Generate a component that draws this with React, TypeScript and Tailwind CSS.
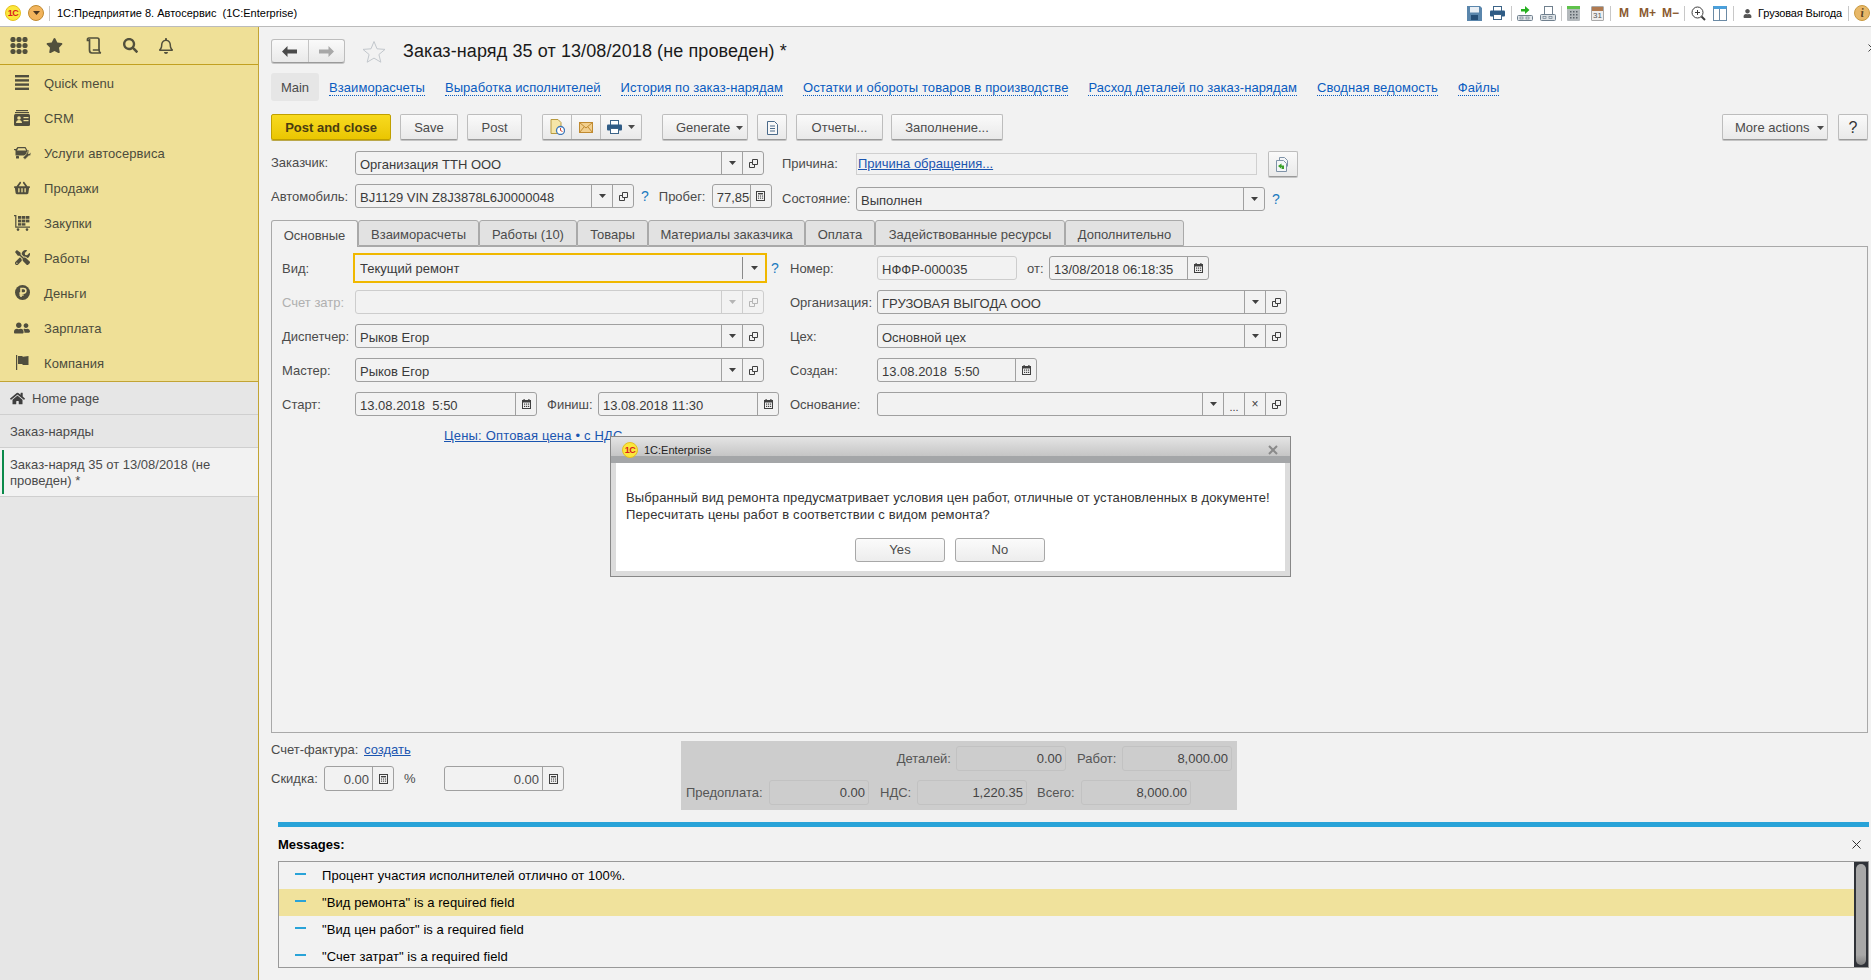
import React from "react";
import { FaHome, FaShoppingBasket, FaTools, FaUserFriends, FaUser, FaStar, FaSearch, FaRegBell } from "react-icons/fa";

const MENU: { label: string; icon: React.ReactNode }[] = [
    { label: "Quick menu", icon: <BarsIcon /> },
    { label: "CRM", icon: <CardIcon /> },
    { label: "Услуги автосервиса", icon: <CarIcon /> },
    { label: "Продажи", icon: <FaShoppingBasket size={16} /> },
    { label: "Закупки", icon: <CartIcon /> },
    { label: "Работы", icon: <FaTools size={15} /> },
    { label: "Деньги", icon: <RubleIcon /> },
    { label: "Зарплата", icon: <FaUserFriends size={16} /> },
    { label: "Компания", icon: <FlagIcon /> },
];

const LINKS = [
    { label: "Взаиморасчеты", w: "ml-[10px]" },
    { label: "Выработка исполнителей", w: "ml-[20px]" },
    { label: "История по заказ-нарядам", w: "ml-[20px]" },
    { label: "Остатки и обороты товаров в производстве", w: "ml-[20px]" },
    { label: "Расход деталей по заказ-нарядам", w: "ml-[20px]" },
    { label: "Сводная ведомость", w: "ml-[20px]" },
    { label: "Файлы", w: "ml-[20px]" },
];

const TABS = [
    { label: "Основные", w: "w-[87px]", active: true },
    { label: "Взаиморасчеты", w: "w-[121px]" },
    { label: "Работы (10)", w: "w-[98px]" },
    { label: "Товары", w: "w-[71px]" },
    { label: "Материалы заказчика", w: "w-[157px]" },
    { label: "Оплата", w: "w-[70px]" },
    { label: "Задействованные ресурсы", w: "w-[190px]" },
    { label: "Дополнительно", w: "w-[119px]" },
];

const MESSAGES = [
    { text: "Процент участия исполнителей отлично от 100%." },
    { text: "\"Вид ремонта\" is a required field", active: true },
    { text: "\"Вид цен работ\" is a required field" },
    { text: "\"Счет затрат\" is a required field" },
];

const LABEL = "pt-[1px] text-[#4b4b4b] ";

function BarsIcon() {
    return (
        <svg width="16" height="15" viewBox="0 0 16 15" fill="currentColor">
            <rect x="1" y="0" width="14" height="2.4" />
            <rect x="1" y="4.2" width="14" height="2.4" />
            <rect x="1" y="8.4" width="14" height="2.4" />
            <rect x="1" y="12.6" width="14" height="2.4" />
        </svg>
    );
}

function CardIcon() {
    return (
        <svg width="16" height="16" viewBox="0 0 16 16" fill="currentColor">
            <rect x="2" y="0" width="12" height="1.2" />
            <rect x="1" y="2" width="14" height="1.2" />
            <rect x="0" y="4" width="16" height="12" rx="1.5" />
            <circle cx="5" cy="8" r="1.8" fill="#efe097" />
            <path d="M2 13c0-2 1.4-3 3-3s3 1 3 3z" fill="#efe097" />
            <rect x="9.5" y="7" width="5" height="1.2" fill="#efe097" />
            <rect x="9.5" y="10" width="5" height="1.2" fill="#efe097" />
        </svg>
    );
}

function CarIcon() {
    return (
        <svg width="17" height="14" viewBox="0 0 17 14" fill="currentColor">
            <path d="M3.5 1h8l2 3.5h1.5v2H14v1l-4 2H1.5V4.5L0 4V3h2zM4.2 2.2 3 4.5h9.2l-1.3-2.3z" fillRule="evenodd" />
            <rect x="2" y="10" width="3" height="2.5" rx=".5" />
            <path d="M16.5 6.5l-1.6 1.4-1-.9 1.3-1.6c-1.4-.4-2.9.7-2.6 2.3L9 11.5l2 2 3.8-3.7c1.7.2 2.7-1.4 1.7-3.3z" stroke="#efe097" strokeWidth=".6" />
        </svg>
    );
}

function CartIcon() {
    return (
        <svg width="16" height="16" viewBox="0 0 16 16" fill="currentColor">
            <path d="M0 0h2.4v11.5H16v1.2H1.2V1.2H0z" />
            <rect x="4" y="1" width="3.4" height="2.8" />
            <rect x="8" y="1" width="3.4" height="2.8" />
            <rect x="12" y="1" width="3.4" height="2.8" />
            <rect x="4" y="4.6" width="3.4" height="2.8" />
            <rect x="8" y="4.6" width="3.4" height="2.8" />
            <rect x="12" y="4.6" width="3.4" height="2.8" />
            <rect x="4" y="8.2" width="3.4" height="2.4" />
            <rect x="8" y="8.2" width="3.4" height="2.4" />
            <circle cx="4" cy="14.6" r="1.3" />
            <circle cx="13" cy="14.6" r="1.3" />
        </svg>
    );
}

function RubleIcon() {
    return (
        <svg width="15" height="15" viewBox="0 0 15 15">
            <circle cx="7.5" cy="7.5" r="7.5" fill="currentColor" />
            <path d="M6 12V3.5h2.6a2.3 2.3 0 0 1 0 4.6H4.4M4.4 10h4.2" fill="none" stroke="#efe097" strokeWidth="1.6" />
        </svg>
    );
}

function FlagIcon() {
    return (
        <svg width="13" height="15" viewBox="0 0 13 15" fill="currentColor">
            <rect x="0" y="0" width="1.2" height="15" />
            <path d="M2 1h4l1 .8 5.5-.8v9H7l-1-1H2z" />
        </svg>
    );
}

function GridIcon() {
    return (
        <svg width="18" height="17" viewBox="0 0 18 17" fill="currentColor">
            {[3, 9, 15].flatMap((x) =>
                [2.5, 8.5, 14.5].map((y) => <circle key={x + "-" + y} cx={x} cy={y} r="2.6" />)
            )}
        </svg>
    );
}

function ScrollIcon() {
    return (
        <svg width="17" height="17" viewBox="0 0 17 17" fill="none" stroke="currentColor" strokeWidth="1.7">
            <path d="M3.5 3.5H1.5V2a1.3 1.3 0 0 1 1.3-1h8.5c1.2 0 1.7.8 1.7 1.8V13" />
            <path d="M3.5 2v11c0 1.6.8 3 2.4 3h9c-1.2-.4-1.9-1.2-1.9-3H6.8" />
        </svg>
    );
}

function Arrow() {
    return (
        <svg width="7" height="4" viewBox="0 0 7 4" fill="currentColor">
            <path d="M0 0h7L3.5 4z" />
        </svg>
    );
}

function OpenIcon() {
    return (
        <svg width="9" height="9" viewBox="0 0 9 9" fill="none" stroke="currentColor">
            <path d="M3.5 .5h5v5h-5z" />
            <path d="M3 3.5H.5v5h5V6" />
        </svg>
    );
}

function CalendarIcon() {
    return (
        <svg width="9" height="10" viewBox="0 0 9 10" fill="currentColor">
            <path d="M0 1h1.5V0h1.2v1h3.6V0h1.2v1H9v9H0zM1 3.5V9h7V3.5z" fillRule="evenodd" />
            <rect x="2" y="4.5" width="1.2" height="1.2" />
            <rect x="4" y="4.5" width="1.2" height="1.2" />
            <rect x="6" y="4.5" width="1.2" height="1.2" />
            <rect x="2" y="6.8" width="1.2" height="1.2" />
            <rect x="4" y="6.8" width="1.2" height="1.2" />
            <rect x="6" y="6.8" width="1.2" height="1.2" />
        </svg>
    );
}

function CalcIcon() {
    return (
        <svg width="9" height="10" viewBox="0 0 9 10" fill="currentColor">
            <path d="M0 0h9v10H0zM1 1v7.9h7V1z" fillRule="evenodd" />
            <rect x="2" y="2" width="5" height="1.4" />
            <rect x="2" y="4.5" width="1.1" height="1.1" />
            <rect x="4" y="4.5" width="1.1" height="1.1" />
            <rect x="6" y="4.5" width="1.1" height="1.1" />
            <rect x="2" y="6.6" width="1.1" height="1.1" />
            <rect x="4" y="6.6" width="1.1" height="1.1" />
            <rect x="6" y="6.6" width="1.1" height="1.1" />
        </svg>
    );
}

function PrinterIcon() {
    return (
        <svg width="15" height="14" viewBox="0 0 15 14">
            <rect x="3.5" y=".5" width="8" height="5" fill="#fff" stroke="#3c6488" />
            <rect x="0" y="4.5" width="15" height="6" rx="1" fill="#2f5c86" />
            <rect x="3.5" y="8.5" width="8" height="5" fill="#fff" stroke="#3c6488" />
        </svg>
    );
}

function Logo1C() {
    return (
        <span className="flex h-[16px] w-[16px] shrink-0 items-center justify-center rounded-full border border-[#e6c020] bg-[#fbe73c] text-[9px] font-bold leading-none tracking-[-0.5px] text-[#d8201c]">
            1С
        </span>
    );
}

function TopIcon({ children, className }: { children: React.ReactNode; className: string }) {
    return <span className={"flex h-[16px] items-center justify-center " + className}>{children}</span>;
}

function TopSep({ className }: { className: string }) {
    return <span className={"h-[15px] w-px bg-[#c8c8c8] " + className} />;
}

function TopBar() {
    return (
        <div className="flex h-[27px] items-center border-b border-[#bbbbbb] bg-white text-[11px] text-black">
            <span className="ml-[5px]"><Logo1C /></span>
            <span className="ml-[7px] flex h-[16px] w-[16px] items-center justify-center rounded-full border border-[#c08a30] bg-[#f2b45c] text-[#4a3520]">
                <Arrow />
            </span>
            <span className="ml-[5px] h-[15px] w-px bg-[#c8c8c8]" />
            <span className="ml-[7px] whitespace-pre">1С:Предприятие 8. Автосервис  (1С:Enterprise)</span>
            <div className="ml-auto flex items-center">
                <TopIcon className="w-[15px]">
                    <svg width="15" height="15" viewBox="0 0 15 15">
                        <path d="M0 0h13l2 2v13H0z" fill="#5a86ac" />
                        <rect x="3" y="1" width="9" height="5.5" fill="#e8eef4" />
                        <rect x="4" y="9" width="7" height="5" fill="#254e76" />
                    </svg>
                </TopIcon>
                <TopIcon className="ml-[8px] w-[15px]"><PrinterIcon /></TopIcon>
                <TopSep className="ml-[6px]" />
                <TopIcon className="ml-[5px] w-[16px]">
                    <svg width="16" height="15" viewBox="0 0 16 15">
                        <path d="M4 3h4V0l4.5 4L8 8V5.5H4z" fill="#25b020" />
                        <rect x=".5" y="9.5" width="15" height="5" rx="1" fill="#e2e6ea" stroke="#70808e" />
                        <rect x="3" y="11" width="3" height="2" fill="none" stroke="#70808e" strokeWidth=".7" />
                        <rect x="9" y="11" width="3" height="2" fill="none" stroke="#70808e" strokeWidth=".7" />
                    </svg>
                </TopIcon>
                <TopIcon className="ml-[7px] w-[16px]">
                    <svg width="16" height="15" viewBox="0 0 16 15">
                        <rect x="4.5" y=".5" width="8" height="8" fill="#fff" stroke="#70808e" />
                        <rect x=".5" y="8.5" width="15" height="6" rx="1" fill="#dde2e6" stroke="#70808e" />
                        <rect x="3" y="10.5" width="3" height="2" fill="none" stroke="#70808e" strokeWidth=".7" />
                        <rect x="9" y="10.5" width="3" height="2" fill="none" stroke="#70808e" strokeWidth=".7" />
                    </svg>
                </TopIcon>
                <TopSep className="ml-[5px]" />
                <TopIcon className="ml-[5px] w-[13px]">
                    <svg width="13" height="15" viewBox="0 0 13 15">
                        <rect width="13" height="15" rx="1" fill="#b4b9bc" />
                        <rect width="13" height="3" fill="#5fc24c" />
                        <g fill="#5a6268">
                            <rect x="3" y="5" width="1.5" height="1.5" /><rect x="6" y="5" width="1.5" height="1.5" /><rect x="9" y="5" width="1.5" height="1.5" />
                            <rect x="3" y="8" width="1.5" height="1.5" /><rect x="6" y="8" width="1.5" height="1.5" /><rect x="9" y="8" width="1.5" height="1.5" />
                            <rect x="3" y="11" width="1.5" height="1.5" /><rect x="6" y="11" width="1.5" height="1.5" /><rect x="9" y="11" width="1.5" height="1.5" />
                        </g>
                    </svg>
                </TopIcon>
                <TopIcon className="relative ml-[11px] w-[13px]">
                    <span className="flex h-[15px] w-[13px] flex-col overflow-hidden rounded-[1px] border border-[#a9a9a9] bg-[#eeeeee]">
                        <span className="h-[4px] w-full shrink-0 bg-[#b07a50]" />
                        <span className="text-center text-[8px] leading-[10px] text-[#555555]">31</span>
                    </span>
                </TopIcon>
                <TopSep className="ml-[6px]" />
                <span className="ml-[8px] text-[12px] font-bold text-[#8a5a30]">M</span>
                <span className="ml-[10px] text-[12px] font-bold text-[#8a5a30]">M+</span>
                <span className="ml-[6px] text-[12px] font-bold text-[#8a5a30]">M−</span>
                <TopSep className="ml-[5px]" />
                <TopIcon className="ml-[6px] w-[15px]">
                    <svg width="15" height="15" viewBox="0 0 15 15" fill="none" stroke="#3d3d3d">
                        <circle cx="6.5" cy="6.5" r="5.5" />
                        <path d="M4 6.5h5M6.5 4v5" />
                        <path d="M10.5 10.5 14 14" strokeWidth="2" />
                    </svg>
                </TopIcon>
                <TopIcon className="ml-[7px] w-[14px]">
                    <span className="flex h-[15px] w-[14px] border border-[#6b8aa5] border-t-[3px] border-t-[#4aa0dc]">
                        <span className="w-1/2 border-r border-[#6b8aa5]" />
                    </span>
                </TopIcon>
                <TopSep className="ml-[6px]" />
                <span className="ml-[9px] text-[#555555]"><FaUser size={9} /></span>
                <span className="ml-[6px] whitespace-nowrap tracking-[-0.15px]">Грузовая Выгода</span>
                <TopSep className="ml-[6px]" />
                <span className="ml-[5px] mr-[1px] flex h-[16px] w-[16px] items-center justify-center rounded-full border border-[#c99a40] bg-[#e8b868] font-serif text-[11px] font-bold italic leading-none text-[#5a4020]">
                    i
                </span>
            </div>
        </div>
    );
}

function Sidebar() {
    return (
        <aside className="flex w-[259px] shrink-0 flex-col border-r border-[#c2a434] bg-[#e6e6e6]">
            <div className="flex h-[38px] items-center border-b border-[#c2a020] bg-[#efe097] text-[#52503c]">
                <span className="ml-[10px]"><GridIcon /></span>
                <span className="ml-[18px]"><FaStar size={17} /></span>
                <span className="ml-[23px]"><ScrollIcon /></span>
                <span className="ml-[20px]"><FaSearch size={15} /></span>
                <span className="ml-[20px]"><FaRegBell size={16} /></span>
            </div>
            <div className="flex flex-col border-b border-[#c2a434] bg-[#efe097] pb-[1px] tracking-[0.08px] text-[#4c4c3c]">
                {MENU.map((item) => (
                    <div key={item.label} className="flex h-[35px] items-center">
                        <span className="flex w-[44px] shrink-0 justify-center text-[#504e3e]">{item.icon}</span>
                        <span className="pt-[2px]">{item.label}</span>
                    </div>
                ))}
            </div>
            <div className="flex h-[33px] items-center border-b border-[#cfcfcf] text-[#4a4a4a]">
                <span className="ml-[10px] text-[#3f3f3f]"><FaHome size={15} /></span>
                <span className="ml-[7px] pt-[2px]">Home page</span>
            </div>
            <div className="flex h-[33px] items-center border-b border-[#cfcfcf] pl-[10px] pt-[2px] text-[#4a4a4a]">
                Заказ-наряды
            </div>
            <div className="flex h-[49px] items-center border-b border-[#cfcfcf] bg-[#f2f2f2] py-[2px] pl-[2px] text-[#4a4a4a]">
                <span className="h-full w-[2px] shrink-0 bg-[#0a8a4a]" />
                <span className="ml-[6px] w-[240px] pt-[1px] leading-[16px]">Заказ-наряд 35 от 13/08/2018 (не проведен) *</span>
            </div>
        </aside>
    );
}

const BTN = "flex h-[26px] items-center justify-center rounded-[2px] border border-[#bdbdbd] border-b-[#9a9a9a] bg-gradient-to-b from-[#fafafa] to-[#e9e9e9] pt-[1px] text-[#4b4b4b] shadow-[0_1px_0_#c4c4c4]";

function Toolbar() {
    return (
        <div className="mt-[13px] flex h-[27px] pr-[3px]">
            <button className="flex h-[26px] w-[120px] items-center justify-center rounded-[2px] border border-[#c0a000] bg-gradient-to-b from-[#f8da1e] to-[#eac600] pt-[1px] font-bold text-[#4a3c10] shadow-[0_1px_0_#bba84a]">
                Post and close
            </button>
            <button className={BTN + " ml-[9px] w-[58px]"}>Save</button>
            <button className={BTN + " ml-[9px] w-[55px]"}>Post</button>
            <div className={BTN + " ml-[20px] w-[100px] !justify-start !pt-0"}>
                <span className="flex h-full w-[29px] items-center justify-center border-r border-[#bdbdbd]">
                    <svg width="15" height="16" viewBox="0 0 15 16">
                        <path d="M1 .5h7l3 3v11H1z" fill="#f5e6a8" stroke="#b89a40" />
                        <circle cx="10.5" cy="11.5" r="4" fill="#fff" stroke="#3f78b8" strokeWidth="1.3" />
                        <path d="M10.5 9v2.5l2 1" fill="none" stroke="#d04030" />
                    </svg>
                </span>
                <span className="flex h-full w-[29px] items-center justify-center border-r border-[#bdbdbd]">
                    <svg width="14" height="11" viewBox="0 0 14 11">
                        <rect x=".5" y=".5" width="13" height="10" fill="#f2cf8e" stroke="#c08a30" />
                        <path d="M.5.5 7 6l6.5-5.5M.5 10.5 5 5M13.5 10.5 9 5" fill="none" stroke="#c08a30" />
                    </svg>
                </span>
                <span className="flex flex-1 items-center justify-center gap-[6px] text-[#4b4b4b]">
                    <PrinterIcon />
                    <Arrow />
                </span>
            </div>
            <button className={BTN + " ml-[20px] w-[86px] !justify-start gap-[6px] pl-[13px]"}>Generate <Arrow /></button>
            <button className={BTN + " ml-[9px] w-[30px]"}>
                <svg width="11" height="14" viewBox="0 0 11 14" fill="none" stroke="#4a6a8a">
                    <path d="M.5.5h7l3 3v10H.5z" fill="#f8f8f8" />
                    <path d="M3 5h5M3 7.5h5M3 10h5" />
                </svg>
            </button>
            <button className={BTN + " ml-[9px] w-[87px]"}>Отчеты...</button>
            <button className={BTN + " ml-[8px] w-[112px]"}>Заполнение...</button>
            <button className={BTN + " ml-auto w-[106px] !justify-start gap-[8px] pl-[12px]"}>More actions <Arrow /></button>
            <button className={BTN + " ml-[10px] w-[30px] text-[16px] text-[#333333]"}>?</button>
        </div>
    );
}

type Seg = "arrow" | "open" | "calendar" | "calc" | "dots" | "clear";

function Field({ w, text, segs = [], disabled, right }: { w: string; text?: string; segs?: Seg[]; disabled?: boolean; right?: boolean }) {
    const line = disabled ? "border-[#cdcdcd]" : "border-[#a0a0a0]";
    const ink = disabled ? "text-[#b5b5b5]" : "text-[#404040]";
    return (
        <div className={"flex shrink-0 items-stretch overflow-hidden rounded-[3px] border " + (right ? "h-[25px] " : "h-[24px] ") + line + " " + w}>
            <span className={"min-w-0 flex-1 overflow-hidden whitespace-pre pt-[2px] leading-[22px] " + (right ? "pr-[3px] text-right text-[#4b4b4b]" : "pl-[4px] text-[#3a3a3a]")}>{text}</span>
            {segs.map((s, i) => (
                <span key={i} className={"flex w-[21px] shrink-0 items-center justify-center border-l " + line + " " + ink}>
                    {s === "arrow" && <Arrow />}
                    {s === "open" && <OpenIcon />}
                    {s === "calendar" && <CalendarIcon />}
                    {s === "calc" && <CalcIcon />}
                    {s === "dots" && <span className="pt-[6px] text-[11px] leading-none">...</span>}
                    {s === "clear" && <span className="text-[12px] leading-none">×</span>}
                </span>
            ))}
        </div>
    );
}

function Help({ className = "" }: { className?: string }) {
    return <span className={"text-[14px] text-[#1a7abf] " + className}>?</span>;
}

function HeaderForm() {
    return (
        <div className="mt-[10px] flex h-[70px]">
            <div className="flex w-[511px] shrink-0 flex-col gap-[9px]">
                <div className="flex items-center">
                    <span className="w-[84px] text-[#4b4b4b]">Заказчик:</span>
                    <Field w="w-[409px]" text="Организация ТТН ООО" segs={["arrow", "open"]} />
                </div>
                <div className="flex items-center">
                    <span className={LABEL + "w-[84px]"}>Автомобиль:</span>
                    <Field w="w-[279px]" text="BJ1129 VIN Z8J3878L6J0000048" segs={["arrow", "open"]} />
                    <Help className="ml-[7px]" />
                    <span className={LABEL + "ml-[10px] w-[53px]"}>Пробег:</span>
                    <Field w="w-[60px]" text="77,850" segs={["calc"]} />
                </div>
            </div>
            <div className="flex flex-col">
                <div className="flex h-[26px] items-center">
                    <span className="w-[74px] text-[#4b4b4b]">Причина:</span>
                    <div className="h-[22px] w-[401px] border border-[#d0d0d0] pl-[1px] leading-[20px] text-[#1a55b0] underline">Причина обращения...</div>
                    <button className={BTN + " ml-[11px] w-[30px]"}>
                        <svg width="14" height="15" viewBox="0 0 14 15" fill="none">
                            <path d="M3.5 3.5v-3h5l3 3v6" fill="#f4f6f8" stroke="#7f93a8" />
                            <path d="M.5 3.5h7l3 3v8H.5z" fill="#f4f6f8" stroke="#7f93a8" />
                            <path d="M8 12V8.500H5.500v-2L2 9l3.500 3V10H6v2z" fill="#38a028" />
                        </svg>
                    </button>
                </div>
                <div className="mt-[10px] flex items-center">
                    <span className="w-[74px] text-[#4b4b4b]">Состояние:</span>
                    <Field w="w-[409px]" text="Выполнен" segs={["arrow"]} />
                    <Help className="ml-[7px]" />
                </div>
            </div>
        </div>
    );
}

function TabBox() {
    return (
        <div className="mt-[-1px] flex h-[513px] w-[1597px] flex-col">
            <div className="flex h-[27px] shrink-0">
                {TABS.map((tab) => (
                    <div
                        key={tab.label}
                        className={
                            "flex items-center justify-center rounded-t-[3px] border border-[#a9a9a9] pt-[4px] text-[#4b4b4b] " +
                            tab.w +
                            (tab.active ? " relative z-10 h-[27px] border-b-0 bg-[#f2f2f2]" : " h-[26px] bg-[#e2e2e2]")
                        }
                    >
                        {tab.label}
                    </div>
                ))}
            </div>
            <div className="-mt-px flex-1 border border-[#a9a9a9] pl-[10px] pt-[9px]">
                <div className="flex">
                    <div className="flex w-[508px] shrink-0 flex-col gap-[10px]">
                        <div className="flex h-[24px] items-center">
                            <span className={LABEL + "w-[71px]"}>Вид:</span>
                            <div className="flex h-[30px] w-[414px] shrink-0 items-stretch border-2 border-[#f0b800]">
                                <span className="flex-1 pl-[5px] pt-[2px] leading-[24px] text-[#3a3a3a]">Текущий ремонт</span>
                                <span className="my-[2px] flex w-[23px] items-center justify-center border-l border-[#8a8a8a] text-[#404040]"><Arrow /></span>
                            </div>
                            <Help className="ml-[4px]" />
                        </div>
                        <div className="flex h-[24px] items-center">
                            <span className="w-[73px] pt-[1px] text-[#b0b0b0]">Счет затр:</span>
                            <Field w="w-[409px]" segs={["arrow", "open"]} disabled />
                        </div>
                        <div className="flex h-[24px] items-center">
                            <span className={LABEL + "w-[73px]"}>Диспетчер:</span>
                            <Field w="w-[409px]" text="Рыков Егор" segs={["arrow", "open"]} />
                        </div>
                        <div className="flex h-[24px] items-center">
                            <span className={LABEL + "w-[73px]"}>Мастер:</span>
                            <Field w="w-[409px]" text="Рыков Егор" segs={["arrow", "open"]} />
                        </div>
                        <div className="flex h-[24px] items-center">
                            <span className={LABEL + "w-[73px]"}>Старт:</span>
                            <Field w="w-[182px]" text="13.08.2018  5:50" segs={["calendar"]} />
                            <span className={LABEL + "ml-[10px] w-[51px]"}>Финиш:</span>
                            <Field w="w-[181px]" text="13.08.2018 11:30" segs={["calendar"]} />
                        </div>
                    </div>
                    <div className="flex flex-col gap-[10px]">
                        <div className="flex h-[24px] items-center">
                            <span className={LABEL + "w-[87px]"}>Номер:</span>
                            <Field w="w-[140px]" text="НФФР-000035" disabled />
                            <span className={LABEL + "ml-[10px] w-[22px]"}>от:</span>
                            <Field w="w-[160px]" text="13/08/2018 06:18:35" segs={["calendar"]} />
                        </div>
                        <div className="flex h-[24px] items-center">
                            <span className={LABEL + "w-[87px]"}>Организация:</span>
                            <Field w="w-[410px]" text="ГРУЗОВАЯ ВЫГОДА ООО" segs={["arrow", "open"]} />
                        </div>
                        <div className="flex h-[24px] items-center">
                            <span className={LABEL + "w-[87px]"}>Цех:</span>
                            <Field w="w-[410px]" text="Основной цех" segs={["arrow", "open"]} />
                        </div>
                        <div className="flex h-[24px] items-center">
                            <span className={LABEL + "w-[87px]"}>Создан:</span>
                            <Field w="w-[160px]" text="13.08.2018  5:50" segs={["calendar"]} />
                        </div>
                        <div className="flex h-[24px] items-center">
                            <span className={LABEL + "w-[87px]"}>Основание:</span>
                            <Field w="w-[410px]" segs={["arrow", "dots", "clear", "open"]} />
                        </div>
                    </div>
                </div>
                <div className="ml-[162px] mt-[12px] leading-[16px] tracking-[0.18px] text-[#1a55b0] underline">Цены: Оптовая цена • с НДС</div>
            </div>
        </div>
    );
}

function TotalField({ w, value }: { w: string; value: string }) {
    return (
        <span className={"flex h-[25px] shrink-0 items-center justify-end rounded-[3px] border border-[#c2c2c2] pr-[3px] pt-[1px] text-[#444444] " + w}>{value}</span>
    );
}

function Totals() {
    return (
        <div className="flex h-[89px]">
            <div className="w-[410px] shrink-0 pt-[8px]">
                <div className="leading-[18px] text-[#4b4b4b]">
                    Счет-фактура: <span className="ml-[2px] text-[#1a55b0] underline">создать</span>
                </div>
                <div className="mt-[7px] flex items-center">
                    <span className="w-[53px] text-[#4b4b4b]">Скидка:</span>
                    <Field w="w-[70px]" text="0.00" segs={["calc"]} right />
                    <span className="ml-[10px] w-[40px] text-[#4b4b4b]">%</span>
                    <Field w="w-[120px]" text="0.00" segs={["calc"]} right />
                </div>
            </div>
            <div className="mt-[8px] flex h-[69px] w-[556px] flex-col gap-[9px] bg-[#cdcdcd] pt-[5px] text-[#555555]">
                <div className="flex items-center">
                    <span className="w-[270px] text-right">Деталей:</span>
                    <TotalField w="ml-[5px] w-[110px]" value="0.00" />
                    <span className="ml-[11px] w-[45px]">Работ:</span>
                    <TotalField w="w-[110px]" value="8,000.00" />
                </div>
                <div className="flex items-center">
                    <span className="ml-[5px] w-[83px]">Предоплата:</span>
                    <TotalField w="w-[100px]" value="0.00" />
                    <span className="ml-[11px] w-[37px]">НДС:</span>
                    <TotalField w="w-[110px]" value="1,220.35" />
                    <span className="ml-[10px] w-[44px]">Всего:</span>
                    <TotalField w="w-[110px]" value="8,000.00" />
                </div>
            </div>
        </div>
    );
}

function Messages() {
    return (
        <div className="ml-[7px] flex w-[1591px] flex-col">
            <div className="h-[5px] bg-[#29a3d8]" />
            <div className="flex h-[34px] items-center justify-between pr-[8px] font-bold text-black">
                <span className="pt-[1px]">Messages:</span>
                <svg width="9" height="9" viewBox="0 0 9 9" stroke="#333333" fill="none"><path d="M.5.5l8 8M8.5.5l-8 8" /></svg>
            </div>
            <div className="flex h-[107px] overflow-hidden border border-[#999999]">
                <div className="min-w-0 flex-1 tracking-[0.08px]">
                    {MESSAGES.map((m) => (
                        <div key={m.text} className={"flex h-[27px] items-center text-black " + (m.active ? "bg-[#f0e29c]" : "")}>
                            <span className="mb-[3px] ml-[16px] h-[2px] w-[11px] shrink-0 bg-[#29a3d8]" />
                            <span className="ml-[16px] pt-[1px]">{m.text}</span>
                        </div>
                    ))}
                </div>
                <div className="flex w-[14px] shrink-0 justify-center bg-[#2f3238] py-[2px]">
                    <span className="w-[10px] rounded-[5px] bg-gradient-to-b from-[#a8a8a8] from-90% to-[#808080]" />
                </div>
            </div>
        </div>
    );
}

function Dialog() {
    return (
        <div className="absolute left-[610px] top-[436px] flex h-[141px] w-[681px] flex-col border border-[#888888] bg-[#dcdcdc]">
            <div className="flex h-[26px] items-center bg-[linear-gradient(#e4e4e4,#c6c6c6_72%,#a4a6a8_73%)] pl-[11px] pr-[12px] text-[11px] text-[#222222]">
                <Logo1C />
                <span className="ml-[6px]">1C:Enterprise</span>
                <svg className="ml-auto" width="10" height="10" viewBox="0 0 10 10" stroke="#8a8a8a" strokeWidth="2" fill="none"><path d="M1 1l8 8M9 1l-8 8" /></svg>
            </div>
            <div className="mx-[5px] mb-[5px] flex flex-1 flex-col bg-white pl-[10px] pt-[26px] tracking-[0.12px] text-[#333333]">
                <div className="leading-[17px]">
                    Выбранный вид ремонта предусматривает условия цен работ, отличные от установленных в документе!
                    <br />
                    Пересчитать цены работ в соответствии с видом ремонта?
                </div>
                <div className="mt-[15px] flex gap-[10px] pl-[229px]">
                    <button className="h-[24px] w-[90px] rounded-[3px] border border-[#a8a8a8] bg-gradient-to-b from-[#fbfbfb] to-[#ededed] text-[#4b4b4b]">Yes</button>
                    <button className="h-[24px] w-[90px] rounded-[3px] border border-[#a8a8a8] bg-gradient-to-b from-[#fbfbfb] to-[#ededed] text-[#4b4b4b]">No</button>
                </div>
            </div>
        </div>
    );
}

export default function App() {
    return (
        <div className="relative flex h-[980px] w-[1871px] flex-col overflow-hidden bg-[#f2f2f2] font-['Liberation_Sans',Arial,sans-serif] text-[13px]">
            <TopBar />
            <div className="flex min-h-0 flex-1">
                <Sidebar />
                <main className="relative min-w-0 flex-1 pl-[12px]">
                    <div className="mt-[12px] flex h-[24px] items-center">
                        <div className="flex h-[24px] w-[74px] rounded-[3px] border border-[#bdbdbd] border-b-[#9a9a9a] bg-gradient-to-b from-[#fafafa] to-[#e9e9e9] shadow-[0_1px_0_#c4c4c4]">
                            <span className="flex flex-1 items-center justify-center border-r border-[#c4c4c4]">
                                <svg width="15" height="11" viewBox="0 0 15 11" fill="#4a4a4a"><path d="M0 5.5 5.5 0v3.5H15v4H5.5V11z" /></svg>
                            </span>
                            <span className="flex flex-1 items-center justify-center">
                                <svg width="15" height="11" viewBox="0 0 15 11" fill="#a8a8a8"><path d="M15 5.5 9.5 0v3.5H0v4h9.5V11z" /></svg>
                            </span>
                        </div>
                        <svg className="ml-[17px] shrink-0" width="24" height="23" viewBox="0 0 24 23" fill="none" stroke="#c2c7cc">
                            <path d="M12 1.5l3 7.3 8 .6-6.1 5.1 1.9 7.7-6.8-4.1-6.8 4.1 1.900-7.700L1 9.400l8-.6z" />
                        </svg>
                        <span className="ml-[17px] whitespace-nowrap text-[18px] tracking-[0.1px] text-[#1a1a1a]">Заказ-наряд 35 от 13/08/2018 (не проведен) *</span>
                        <svg className="absolute right-[-5px] top-[17px]" width="8" height="8" viewBox="0 0 8 8" stroke="#444444" fill="none"><path d="M.5.5l7 7M7.5.5l-7 7" /></svg>
                    </div>
                    <div className="mt-[10px] flex h-[28px] items-center">
                        <span className="flex h-[28px] w-[48px] items-center justify-center rounded-[3px] bg-[#e6e6e6] pt-[1px] text-[#4b4b4b]">Main</span>
                        {LINKS.map((l) => (
                            <span key={l.label} className={"mt-[2px] whitespace-nowrap border-b border-dotted border-[#0a5cc0] leading-[15px] tracking-[0.07px] text-[#0a5cc0] " + l.w}>{l.label}</span>
                        ))}
                    </div>
                    <Toolbar />
                    <HeaderForm />
                    <TabBox />
                    <Totals />
                    <Messages />
                </main>
            </div>
            <Dialog />
        </div>
    );
}
